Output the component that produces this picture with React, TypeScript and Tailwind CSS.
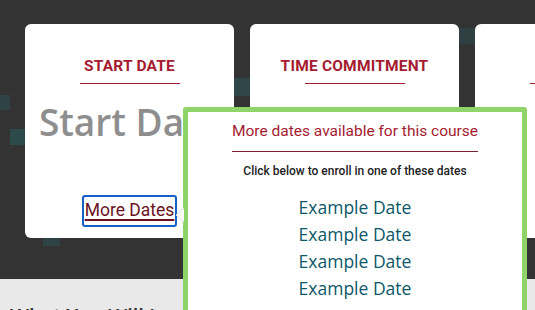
import React from "react";

const heading = { fontFamily: "Roboto, 'Liberation Sans', sans-serif" };
const human = { fontFamily: "'Open Sans', 'Noto Sans', sans-serif" };

function InfoCard({ title, children }: { title: string; children?: React.ReactNode }) {
  return (
    <div className="flex h-[214px] w-[209px] shrink-0 flex-col items-center rounded-md bg-white pt-[32px]">
      <div className="h-[20px] text-[15.5px] font-bold leading-[20px] tracking-[0.2px] text-[#a51c30]" style={heading}>
        {title}
      </div>
      <div className="mt-[7px] h-px w-[100px] bg-[#a51c30]" />
      {children}
    </div>
  );
}

export default function App() {
  const dates = ["Example Date", "Example Date", "Example Date", "Example Date"];
  return (
    <div className="relative h-[310px] w-[535px] overflow-hidden bg-[#e9e9e9]">
      <div className="relative flex h-[279px] gap-4 overflow-hidden bg-[#333333] pl-[25px] pt-[24px]">
        {/* faint background squares */}
        <div className="absolute left-0 top-[95px] h-[15px] w-[10px] bg-[#2f4245]" />
        <div className="absolute left-[10px] top-[129px] h-[16px] w-[15px] bg-[#2c4a4a]" />
        <div className="absolute left-[234px] top-[78px] h-[18px] w-[16px] bg-[#2f4648]" />
        <div className="absolute left-[43px] top-[238px] h-[8px] w-[17px] bg-[#2f4245]" />
        <div className="absolute left-[459px] top-[28px] h-[16px] w-[16px] bg-[#303f41]" />

        <div className="relative z-10 flex gap-4">
          <InfoCard title="START DATE">
            <div className="mt-[16px] whitespace-nowrap text-[37px] font-semibold leading-[44px] text-[#8e8e8e]" style={human}>
              Start Date
            </div>
            <div className="mt-[51px] rounded-[3px] border-2 border-[#1560c4] px-[1px] pt-[1px] pb-[3px]">
              <span
                className="text-[17.5px] leading-[24px] text-[#6b1222] underline decoration-2 underline-offset-[3px]"
                style={heading}
              >
                More Dates
              </span>
            </div>
          </InfoCard>
          <InfoCard title="TIME COMMITMENT" />
          <InfoCard title="" />
        </div>
      </div>

      <div className="px-[10px] pt-[24px] text-[20px] font-semibold leading-[26px] text-[#333]" style={human}>
        What You Will Learn
      </div>

      {/* popover */}
      <div className="absolute left-[183px] top-[107px] z-20 w-[344px] rounded-[3px] border-[5px] border-[#91d36b] bg-white pb-[12px]">
        <svg className="absolute left-[-13px] top-[96px]" width="9" height="14" viewBox="0 0 9 14">
          <path d="M9 0 L1 7 L9 14" fill="white" stroke="#d6d6d6" strokeWidth="1" />
        </svg>
        <div className="flex flex-col items-center">
          <div className="mt-[9px] text-[15.5px] leading-[20px] text-[#a51c30]" style={heading}>
            More dates available for this course
          </div>
          <div className="mt-[10px] h-px w-[246px] bg-[#7d2030]" />
          <div className="mt-[11px] text-[12px] font-medium leading-[16px] text-[#222]" style={heading}>
            Click below to enroll in one of these dates
          </div>
          <div className="mt-[15px] flex flex-col items-center">
            {dates.map((d, i) => (
              <div key={i} className="text-[17.5px] leading-[27px] text-[#0c5868]" style={human}>
                {d}
              </div>
            ))}
          </div>
        </div>
      </div>
    </div>
  );
}
